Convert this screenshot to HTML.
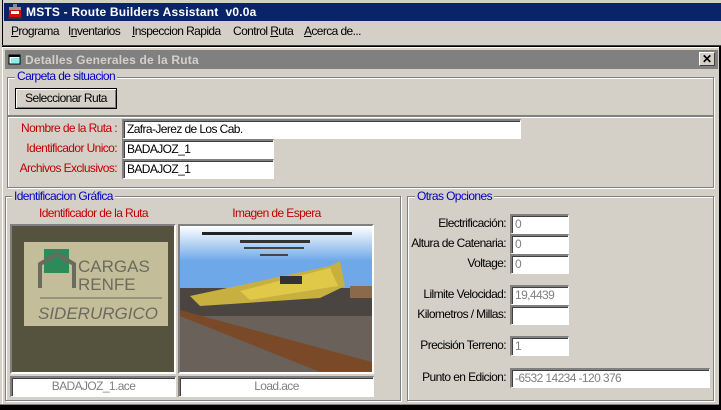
<!DOCTYPE html>
<html><head><meta charset="utf-8">
<style>
*{margin:0;padding:0;box-sizing:border-box}
body{width:721px;height:410px;background:#d4d0c8;position:relative;overflow:hidden;font-family:"Liberation Sans",sans-serif;font-size:12px;letter-spacing:-0.6px;color:#000}
.a{position:absolute}
.in{position:absolute;background:#fff;border-top:2px solid #808080;border-left:2px solid #808080;border-bottom:1px solid #fff;border-right:1px solid #fff;box-shadow:inset 1px 1px 0 #404040;padding:1px 0 0 3px;font-size:12px;line-height:15px;white-space:nowrap}
.dis{color:#808080}
.grp{position:absolute;border:1px solid #808080;box-shadow:1px 1px 0 #fff, inset 1px 1px 0 #fff}
.leg{position:absolute;background:#d4d0c8;color:#0000c0;padding:0 2px;font-size:12px;line-height:13px}
.lbl{position:absolute;text-align:right;white-space:nowrap;font-size:12px}
.red{color:#c00000}
.m{position:absolute;top:24px;font-size:12px;line-height:15px;white-space:nowrap}
</style></head><body>
<div class="a" style="left:0;top:0;width:721px;height:47px;background:#d4d0c8"></div>
<div class="a" style="left:2px;top:0;width:1px;height:46px;background:#000"></div>
<div class="a" style="left:4px;top:3px;width:717px;height:18px;background:#0a246a"></div>
<svg class="a" style="left:8px;top:4px" width="14" height="16" viewBox="0 0 14 16"><rect x="5" y="0" width="4" height="3" fill="#888"/><rect x="1" y="3" width="12" height="3" fill="#999"/><rect x="1" y="6" width="12" height="7" fill="#d01010"/><rect x="3" y="7" width="8" height="3" fill="#fff"/><rect x="0" y="13" width="14" height="2" fill="#333"/></svg>
<div class="a" style="left:26px;top:4px;color:#fff;font-weight:bold;font-size:12px;line-height:16px;letter-spacing:0.2px">MSTS - Route Builders Assistant&nbsp; v0.0a</div>
<div class="m" style="left:11px"><u>P</u>rograma</div>
<div class="m" style="left:68px">I<u>n</u>ventarios</div>
<div class="m" style="left:132px"><u>I</u>nspeccion Rapida</div>
<div class="m" style="left:233px">Control <u>R</u>uta</div>
<div class="m" style="left:304px"><u>A</u>cerca de...</div>
<div class="a" style="left:2px;top:45px;width:719px;height:1px;background:#404040"></div>
<div class="a" style="left:2px;top:46px;width:719px;height:1px;background:#000"></div>
<div class="a" style="left:2px;top:47px;width:719px;height:363px;background:#d4d0c8;border-left:1px solid #fff;border-top:1px solid #fff"></div>
<div class="a" style="left:5px;top:50px;width:713px;height:19px;background:#808080"></div>
<svg class="a" style="left:8px;top:53px" width="14" height="13" viewBox="0 0 14 13"><rect x="1" y="2" width="11" height="9" fill="#fff" stroke="#000"/><rect x="1" y="2" width="11" height="2" fill="#000"/><rect x="3" y="5" width="8" height="5" fill="#8ee"/></svg>
<div class="a" style="left:25px;top:52px;color:#d4d0c8;font-weight:bold;font-size:12px;line-height:16px;letter-spacing:0.2px">Detalles Generales de la Ruta</div>
<div class="a" style="left:699px;top:52px;width:16px;height:14px;background:#d4d0c8;border-top:1px solid #fff;border-left:1px solid #fff;border-right:1px solid #404040;border-bottom:1px solid #404040;font-size:12px;font-weight:bold;line-height:12px;text-align:center;letter-spacing:0">✕</div>
<div class="grp" style="left:7px;top:77px;width:707px;height:39px"></div>
<div class="leg" style="left:15px;top:70px">Carpeta de situacion</div>
<div class="a" style="left:15px;top:88px;width:102px;height:21px;border:1px solid #000;background:#d4d0c8;box-shadow:inset 1px 1px 0 #fff,inset -1px -1px 0 #808080;text-align:center;line-height:18px">Seleccionar Ruta</div>
<div class="grp" style="left:7px;top:116px;width:707px;height:72px"></div>
<div class="lbl red" style="left:0;width:117px;top:121px">Nombre de la Ruta :</div>
<div class="lbl red" style="left:0;width:117px;top:141px">Identificador Unico:</div>
<div class="lbl red" style="left:0;width:117px;top:161px">Archivos Exclusivos:</div>
<div class="in" style="left:122px;top:119px;width:399px;height:20px">Zafra-Jerez de Los Cab.</div>
<div class="in" style="left:122px;top:139px;width:152px;height:20px">BADAJOZ_1</div>
<div class="in" style="left:122px;top:159px;width:152px;height:20px">BADAJOZ_1</div>
<div class="grp" style="left:5px;top:196px;width:396px;height:205px"></div>
<div class="leg" style="left:12px;top:190px">Identificacion Gráfica</div>
<div class="a red" style="left:11px;width:165px;top:206px;text-align:center;font-size:12px">Identificador de la Ruta</div>
<div class="a red" style="left:179px;width:195px;top:206px;text-align:center;font-size:12px">Imagen de Espera</div>
<div class="a" style="left:10px;top:224px;width:166px;height:150px;border:2px solid #808080;border-right-color:#fff;border-bottom-color:#fff;background:#5a5a48;overflow:hidden">
<svg width="162" height="146" viewBox="0 0 162 146"><rect width="162" height="146" fill="#55523e"/><rect x="12" y="16" width="144" height="84" fill="#c4bd9a"/><rect x="32" y="23" width="25" height="24" fill="#2e8a5a"/><path d="M28 62 V38 L45 28 L62 38 V62" fill="none" stroke="#6b6a5e" stroke-width="4"/><text x="66" y="46" font-family="Liberation Sans" font-size="17" fill="#6b6a5e" letter-spacing="0">CARGAS</text><text x="66" y="64" font-family="Liberation Sans" font-size="17" fill="#6b6a5e" letter-spacing="0">RENFE</text><line x1="28" y1="72" x2="150" y2="72" stroke="#6b6a5e"/><text x="26" y="93" font-family="Liberation Sans" font-size="17" font-style="italic" fill="#6b6a5e" letter-spacing="0">SIDERURGICO</text></svg></div>
<div class="a" style="left:178px;top:224px;width:196px;height:150px;border:2px solid #808080;border-right-color:#fff;border-bottom-color:#fff;overflow:hidden">
<svg width="192" height="146" viewBox="0 0 192 146"><defs><linearGradient id="s" x1="0" y1="0" x2="0" y2="1"><stop offset="0" stop-color="#fff"/><stop offset="0.5" stop-color="#6fa8e8"/></linearGradient></defs><rect width="192" height="70" fill="url(#s)"/><rect x="0" y="62" width="192" height="84" fill="#4a4540"/><rect x="0" y="90" width="192" height="56" fill="#6a625a"/><path d="M0 90 L140 146 L192 146 L192 136 L0 84Z" fill="#7a4a28"/><path d="M10 70 L150 40 L160 35 L165 60 L140 72 L20 80Z" fill="#c8b040"/><path d="M60 65 L150 42 L158 60 L70 74Z" fill="#e0c848"/><rect x="100" y="50" width="22" height="8" fill="#333"/><rect x="22" y="6" width="150" height="3" fill="#222"/><rect x="60" y="14" width="70" height="3" fill="#333"/><rect x="64" y="21" width="60" height="2" fill="#444"/><rect x="80" y="28" width="28" height="2" fill="#444"/><rect x="170" y="60" width="22" height="12" fill="#8a6a4a"/></svg></div>
<div class="in dis" style="left:10px;top:376px;width:166px;height:21px;text-align:center;padding-left:0">BADAJOZ_1.ace</div>
<div class="in dis" style="left:178px;top:376px;width:196px;height:21px;text-align:center;padding-left:0">Load.ace</div>
<div class="grp" style="left:407px;top:196px;width:307px;height:205px"></div>
<div class="leg" style="left:415px;top:190px">Otras Opciones</div>
<div class="lbl" style="left:400px;width:106px;top:216px">Electrificación:</div>
<div class="lbl" style="left:400px;width:106px;top:236px">Altura de Catenaria:</div>
<div class="lbl" style="left:400px;width:106px;top:256px">Voltage:</div>
<div class="lbl" style="left:400px;width:106px;top:287px">Lilmite Velocidad:</div>
<div class="lbl" style="left:400px;width:106px;top:307px">Kilometros / Millas:</div>
<div class="lbl" style="left:400px;width:106px;top:338px">Precisión Terreno:</div>
<div class="lbl" style="left:400px;width:106px;top:370px">Punto en Edicion:</div>
<div class="in dis" style="left:510px;top:214px;width:59px;height:20px">0</div>
<div class="in dis" style="left:510px;top:234px;width:59px;height:20px">0</div>
<div class="in dis" style="left:510px;top:254px;width:59px;height:20px">0</div>
<div class="in dis" style="left:510px;top:285px;width:59px;height:20px">19,4439</div>
<div class="in dis" style="left:510px;top:305px;width:59px;height:20px"></div>
<div class="in dis" style="left:510px;top:336px;width:59px;height:20px">1</div>
<div class="in dis" style="left:510px;top:368px;width:200px;height:20px">-6532 14234 -120 376</div>
<div class="a" style="left:0;top:404px;width:721px;height:1px;background:#808080"></div>
<div class="a" style="left:0;top:405px;width:721px;height:5px;background:#000"></div>
<div class="a" style="left:719px;top:47px;width:2px;height:363px;background:#000"></div>
</body></html>
